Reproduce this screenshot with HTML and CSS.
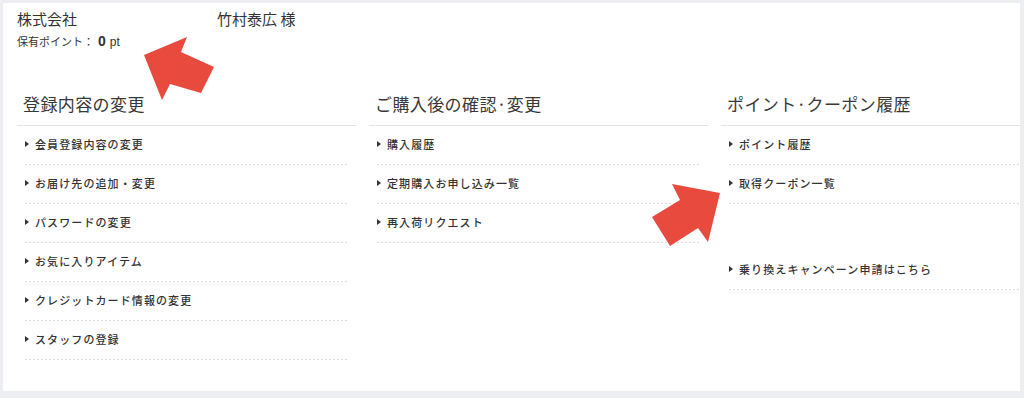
FILE: index.html
```html
<!DOCTYPE html>
<html lang="ja">
<head>
<meta charset="utf-8">
<title>マイページ</title>
<link rel="stylesheet" href="styles.css">
</head>
<body>
<div class="page">
  <div class="panel">
    <div class="member">
      <p class="name">株式会社<span class="masked"></span>竹村泰広 様</p>
      <p class="points">保有ポイント：<b class="pt-num">0</b><span class="pt-unit">pt</span></p>
    </div>
    <div class="menus">
      <section class="menu">
        <h2 class="menu-title">登録内容の変更</h2>
        <ul class="menu-list">
          <li>会員登録内容の変更</li>
          <li>お届け先の追加・変更</li>
          <li>パスワードの変更</li>
          <li>お気に入りアイテム</li>
          <li>クレジットカード情報の変更</li>
          <li>スタッフの登録</li>
        </ul>
      </section>
      <section class="menu">
        <h2 class="menu-title">ご購入後の確認·変更</h2>
        <ul class="menu-list">
          <li>購入履歴</li>
          <li>定期購入お申し込み一覧</li>
          <li>再入荷リクエスト</li>
        </ul>
      </section>
      <section class="menu">
        <h2 class="menu-title">ポイント·クーポン履歴</h2>
        <ul class="menu-list">
          <li>ポイント履歴</li>
          <li>取得クーポン一覧</li>
          <li class="spaced">乗り換えキャンペーン申請はこちら</li>
        </ul>
      </section>
    </div>
  </div>
  <svg class="arrows" width="1024" height="398" viewBox="0 0 1024 398" aria-hidden="true">
    <polygon points="144,55 187,37 181,52 214,67 201,93 170,84 162,100" fill="#e84a3e"/>
    <polygon points="720,193 672,184 680,200 652,217 670,246 698,228 708,242" fill="#e84a3e"/>
  </svg>
</div>
</body>
</html>
```
FILE: styles.css
```css
html, body {
  margin: 0;
  padding: 0;
}
body {
  background: #eceef2;
  font-family: "Noto Sans CJK JP", "Noto Sans", sans-serif;
  color: #333;
}
.page {
  position: relative;
  width: 1024px;
  height: 398px;
  box-sizing: border-box;
  padding: 3px 4px 7px 3px;
  overflow: hidden;
}
.panel {
  background: #fff;
  height: 388px;
  box-sizing: border-box;
  padding: 5px 0 0 14px;
  overflow: hidden;
}
.member p {
  margin: 0;
}
.name {
  font-size: 15px;
  line-height: 22px;
  color: #333;
  white-space: nowrap;
}
.masked {
  display: inline-block;
  width: 140px;
}
.points {
  margin-top: 2px !important;
  font-size: 11px;
  line-height: 18px;
  color: #333;
}
.pt-num {
  font-family: "Liberation Sans", Arial, sans-serif;
  font-size: 14px;
  font-weight: 700;
  margin-left: 4px;
}
.pt-unit {
  font-family: "Liberation Sans", Arial, sans-serif;
  font-size: 12px;
  margin-left: 4px;
}
.menus {
  display: grid;
  grid-template-columns: repeat(3, 339px);
  column-gap: 13px;
  margin-top: 40px;
}
.menu-title {
  margin: 0;
  padding: 1px 6px 9px;
  font-size: 17px;
  line-height: 24px;
  font-weight: 400;
  letter-spacing: 0.4px;
  color: #383838;
  border-bottom: 1px solid #e3e3e3;
  white-space: nowrap;
}
.menu-list {
  list-style: none;
  margin: 0 8px;
  padding: 0;
}
.menu-list li {
  display: flex;
  align-items: center;
  padding: 10px 0 13px;
  font-size: 11px;
  line-height: 16px;
  font-weight: 500;
  letter-spacing: 1.1px;
  color: #333;
  white-space: nowrap;
  background: linear-gradient(to right, #dedede 50%, transparent 50%) left bottom / 4px 1px repeat-x;
}
.menu-list li::before {
  content: "";
  width: 0;
  height: 0;
  border-left: 4px solid #333;
  border-top: 3px solid transparent;
  border-bottom: 3px solid transparent;
  margin-right: 6px;
  flex: none;
}
.menu-list li.spaced {
  margin-top: 47px;
}
.arrows {
  position: absolute;
  top: 0;
  left: 0;
  pointer-events: none;
}
```
